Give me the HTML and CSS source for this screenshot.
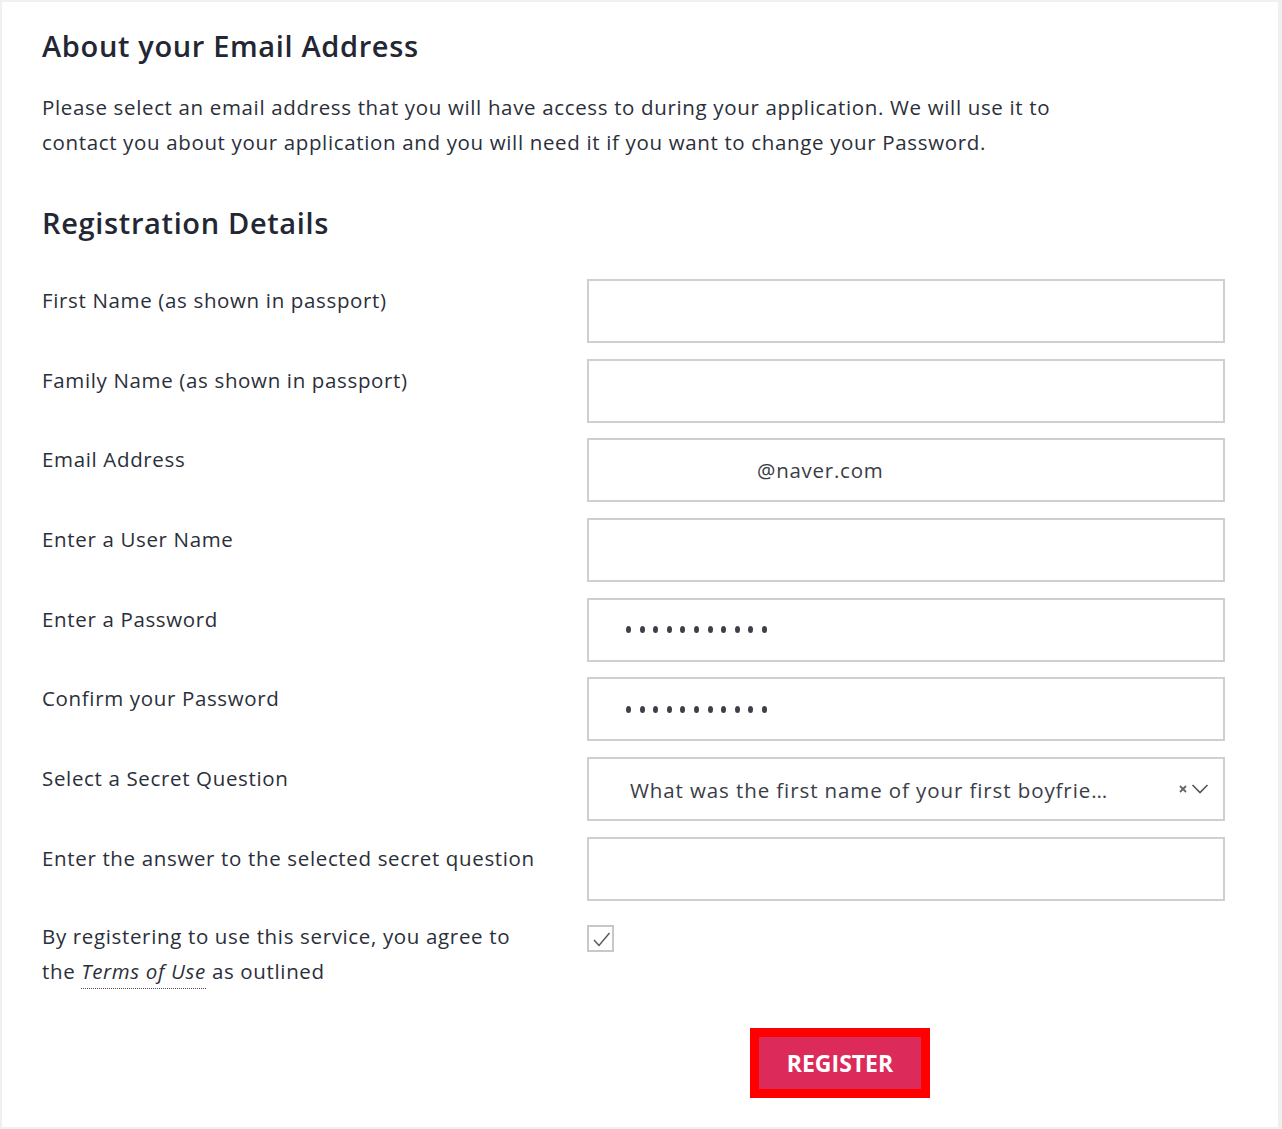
FILE: index.html
```html
<!DOCTYPE html>
<html>
<head>
<meta charset="utf-8">
<link rel="stylesheet" href="styles.css">
</head>
<body>
<div class="page">
  <h2 class="title">About your Email Address</h2>
  <p class="intro">Please select an email address that you will have access to during your application. We will use it to<br>contact you about your application and you will need it if you want to change your Password.</p>
  <h2 class="title title2">Registration Details</h2>
  <div class="form">
    <div class="row"><div class="label">First Name (as shown in passport)</div><div class="field"></div></div>
    <div class="row"><div class="label">Family Name (as shown in passport)</div><div class="field"></div></div>
    <div class="row"><div class="label">Email Address</div><div class="field"><span class="email">@naver.com</span></div></div>
    <div class="row"><div class="label">Enter a User Name</div><div class="field"></div></div>
    <div class="row"><div class="label">Enter a Password</div><div class="field"><span class="dots"><i></i><i></i><i></i><i></i><i></i><i></i><i></i><i></i><i></i><i></i><i></i></span></div></div>
    <div class="row"><div class="label">Confirm your Password</div><div class="field"><span class="dots"><i></i><i></i><i></i><i></i><i></i><i></i><i></i><i></i><i></i><i></i><i></i></span></div></div>
    <div class="row"><div class="label">Select a Secret Question</div><div class="field select"><span class="selval">What was the first name of your first boyfrie…</span>
      <span class="icons"><svg width="10" height="10" viewBox="0 0 10 10"><path d="M2 2L8 8M8 2L2 8" stroke="#666" stroke-width="1.8"/></svg><svg width="18" height="12" viewBox="0 0 18 12"><path d="M1.5 2L9 9.5L16.5 2" stroke="#555" stroke-width="1.6" fill="none"/></svg></span></div></div>
    <div class="row"><div class="label">Enter the answer to the selected secret question</div><div class="field"></div></div>
    <div class="row agree"><div class="label">By registering to use this service, you agree to<br>the <a class="terms">Terms of Use</a> as outlined</div>
      <div class="checkcol"><span class="check"><svg width="25" height="25" viewBox="0 0 25 25"><path d="M5 13L10 18.5L20.5 6" stroke="#555" stroke-width="1.4" fill="none"/></svg></span></div></div>
  </div>
  <div class="actions">
    <div class="highlight"><button class="register">REGISTER</button></div>
  </div>
</div>
</body>
</html>
```
FILE: styles.css
```css
html, body { margin: 0; padding: 0; }
body {
  background: #f0f0f0;
  font-family: "Open Sans", "Noto Sans", sans-serif;
  color: #2b2f3a;
  padding: 2px;
}
.page {
  background: #fff;
  width: 1276px;
  height: 1125px;
  box-sizing: border-box;
  padding: 24px 0 0 40px;
}
.title {
  margin: 0;
  font-size: 29px;
  font-weight: 600;
  line-height: 40px;
  color: #232733;
  letter-spacing: 0.65px;
}
.intro {
  margin: 24px 0 0 0;
  font-size: 20.5px;
  line-height: 35px;
  letter-spacing: 0.65px;
  color: #2b2f3a;
}
.title2 { margin-top: 43px; }
.form { margin-top: 36px; display: flex; flex-direction: column; gap: 15.7px; }
.row { display: flex; align-items: flex-start; }
.label {
  width: 545px;
  font-size: 20.5px;
  line-height: 35px;
  letter-spacing: 0.65px;
  padding-top: 4px;
  color: #2b2f3a;
}
.field {
  width: 638px;
  height: 64px;
  box-sizing: border-box;
  border: 2px solid #cfcfcf;
  display: flex;
  align-items: center;
}
.email { margin-left: 168px; font-size: 20.5px; letter-spacing: 0.75px; color: #3a3d46; }
.dots { margin-left: 37px; display: flex; gap: 8.6px; }
.dots i { width: 5px; height: 7px; background: #3d4048; border-radius: 50%; display: block; }
.select { justify-content: space-between; }
.selval { margin-left: 41px; font-size: 20.5px; letter-spacing: 0.9px; color: #3a3d46; padding-top: 2px; }
.icons { display: flex; align-items: center; gap: 3px; margin-right: 14px; }
.agree .label { padding-top: 2px; }
.checkcol { padding-top: 8px; }
.check {
  display: block;
  width: 27px;
  height: 27px;
  box-sizing: border-box;
  border: 2px solid #c8c8c8;
}
.check svg { display: block; }
.terms {
  font-style: italic;
  border-bottom: 1px dotted #555;
  padding-bottom: 3px;
}
.actions { margin-top: 39px; padding-left: 708px; }
.highlight {
  display: inline-block;
  border: 9px solid #ff0000;
  width: 162px;
}
.register {
  display: block;
  width: 162px;
  height: 52px;
  background: #dc2a5a;
  border: none;
  color: #fff;
  font-family: "Open Sans", sans-serif;
  font-weight: 700;
  font-size: 23px;
  letter-spacing: 0;
  padding: 0;
}
```
